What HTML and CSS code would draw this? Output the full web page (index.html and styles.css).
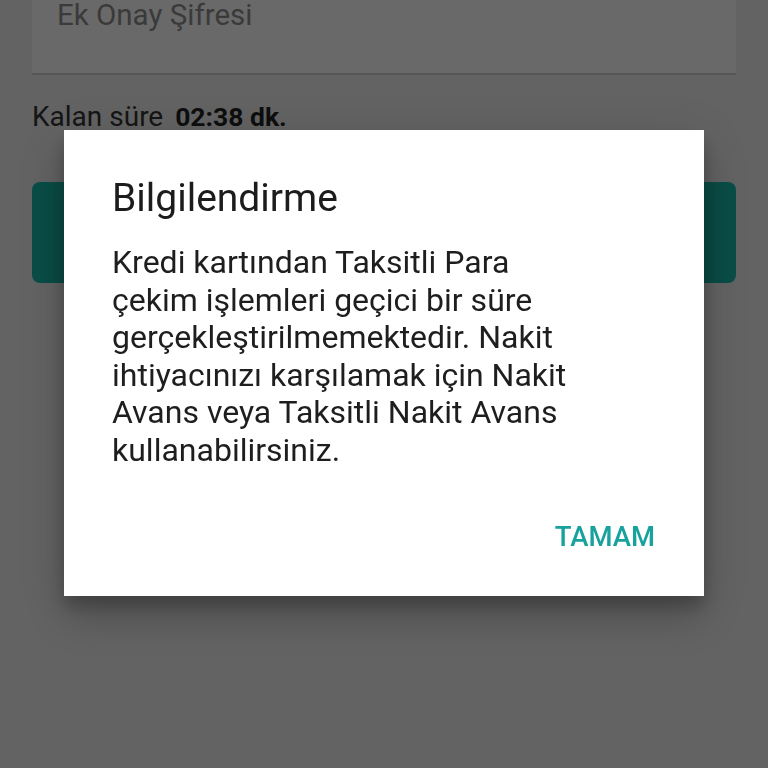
FILE: index.html
```html
<!DOCTYPE html>
<html lang="tr">
<head>
    <meta charset="UTF-8">
    <meta name="viewport" content="width=device-width, initial-scale=1.0">
    <title>Ek Onay</title>
    <link rel="stylesheet" href="styles.css">
</head>
<body>

<div class="screen">
    <div class="field">Ek Onay Şifresi</div>

    <div class="timer">Kalan süre <b>02:38 dk.</b></div>

    <div class="confirm-btn"></div>
</div>

<!-- bilgilendirme penceresi -->
<div class="overlay">
    <div class="dialog">
        <div class="dialog-title">Bilgilendirme</div>
        <p class="dialog-text">Kredi kartından Taksitli Para çekim işlemleri geçici bir süre gerçekleştirilmemektedir. Nakit ihtiyacınızı karşılamak için Nakit Avans veya Taksitli Nakit Avans kullanabilirsiniz.</p>
        <div class="dialog-actions">
            <span class="dialog-btn">TAMAM</span>
        </div>
    </div>
</div>

</body>
</html>
```

FILE: styles.css
```css
body {
    margin: 0;
    padding: 0;
    background-color: #636363;
    font-family: Roboto, "Noto Sans", sans-serif;
}

.screen {
    padding: 0 32px;
}

.field {
    height: 73px;
    background-color: #696969;
    border-bottom: 2px solid #565656;
    padding-left: 25px;
    font-size: 29.5px;
    line-height: 30px;
    color: #3a3a3a;
}

.timer {
    margin-top: 27px;
    font-size: 28px;
    line-height: 30px;
    color: #151515;
}

.timer b {
    margin-left: 5px;
    font-size: 26.5px;
    color: #0e0e0e;
}

.confirm-btn {
    margin-top: 50px;
    height: 101px;
    border-radius: 8px;
    background-color: #0a4d47;
}

/* pencere arka planı */
.overlay {
    position: fixed;
    top: 0;
    left: 0;
    right: 0;
    bottom: 0;
    display: flex;
    justify-content: center;
    align-items: flex-start;
    padding-top: 130px;
}

.dialog {
    width: 640px;
    box-sizing: border-box;
    background-color: #fff;
    padding: 45px 49px 42px 48px;
    box-shadow: 0 24px 38px rgba(0, 0, 0, 0.14), 0 9px 46px rgba(0, 0, 0, 0.12), 0 11px 15px rgba(0, 0, 0, 0.2);
}

.dialog-title {
    font-size: 39px;
    line-height: 46px;
    color: #1c1c1c;
}

.dialog-text {
    max-width: 470px;
    margin: 23px 0 0;
    font-size: 32px;
    line-height: 37.6px;
    color: #1e1e1e;
}

.dialog-actions {
    display: flex;
    justify-content: flex-end;
    margin-top: 50px;
}

.dialog-btn {
    font-size: 27.5px;
    line-height: 34px;
    font-weight: 500;
    color: #18a29e;
}
```
